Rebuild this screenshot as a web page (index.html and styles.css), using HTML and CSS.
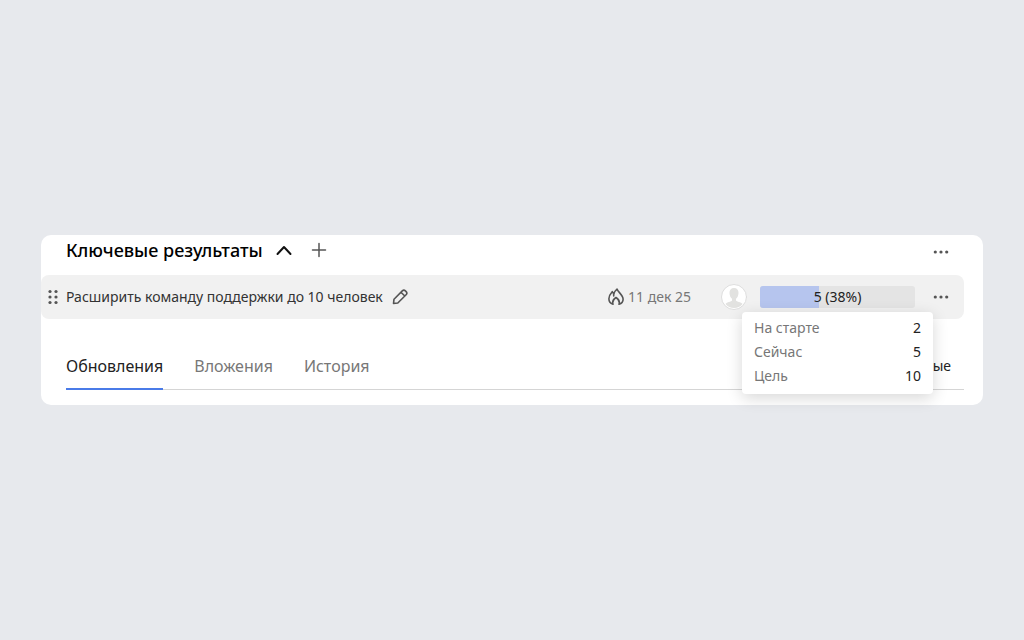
FILE: index.html
```html
<!DOCTYPE html>
<html lang="ru">
<head>
    <meta charset="UTF-8">
    <meta name="viewport" content="width=device-width, initial-scale=1.0">
    <title>Ключевые результаты</title>
    <link rel="stylesheet" href="styles.css">
</head>
<body>
    <main class="card">
        <header class="card-header">
            <div class="heading">
                <h1 class="title">Ключевые результаты</h1>
                <button class="icon-button toggle" aria-label="Свернуть">
                    <svg width="16" height="16" viewBox="0 0 16 16"><path d="M1.5 12 8 5l6.5 7" stroke-width="2"/></svg>
                </button>
                <button class="icon-button add" aria-label="Добавить">
                    <svg width="16" height="16" viewBox="0 0 16 16"><path d="M8 1.5v13M1.5 8h13" stroke-width="1.5"/></svg>
                </button>
            </div>
            <button class="icon-button more" aria-label="Ещё">
                <svg width="16" height="16" viewBox="0 0 16 16" class="dots"><circle cx="2.3" cy="8" r="1.6"/><circle cx="8" cy="8" r="1.6"/><circle cx="13.7" cy="8" r="1.6"/></svg>
            </button>
        </header>

        <section class="result">
            <button class="icon-button drag" aria-label="Переместить">
                <svg width="10" height="16" viewBox="0 0 10 16" class="dots"><circle cx="2" cy="2.5" r="1.6"/><circle cx="8" cy="2.5" r="1.6"/><circle cx="2" cy="8" r="1.6"/><circle cx="8" cy="8" r="1.6"/><circle cx="2" cy="13.5" r="1.6"/><circle cx="8" cy="13.5" r="1.6"/></svg>
            </button>
            <span class="result-name">Расширить команду поддержки до 10 человек</span>
            <button class="icon-button edit" aria-label="Редактировать">
                <svg width="16" height="16" viewBox="0 0 16 16"><path d="M1.5 14.5 2 10.2 10.3 1.9a2.2 2.2 0 0 1 3.1 0l.7.7a2.2 2.2 0 0 1 0 3.1L5.8 14ZM9 3.2 12.8 7" stroke-width="1.6"/></svg>
            </button>
            <div class="deadline">
                <svg width="16" height="18" viewBox="0 0 16 18"><path d="M5 16.2C2.500 15.400.9 13.300.9 10.700c0-2.800 1.500-5 3.300-7 .9.8 1.400 1.800 1.500 2.800C6.200 4.300 7.200 2.500 9 1c1 3.200 6.100 6 6.100 10.200 0 2.500-1.600 4.300-4.100 5M5.700 6.500V8M5 16.200c-.9-2.800.4-5 3-6.700 2.600 1.700 3.900 4 3 6.700" stroke-width="1.6"/></svg>
                <time datetime="2025-12-11">11 дек 25</time>
            </div>
            <svg class="avatar" width="26" height="26" viewBox="0 0 26 26"><circle class="avatar-bg" cx="13" cy="13" r="12.5"/><path class="avatar-person" d="M13 4c-3 0-4.700 2-4.500 5 .1 2.500 1 4.700 2.500 5.800v1.700c-.8 1.200-5 1.600-6.500 3.500C6.500 22.500 9.600 24 13 24s6.500-1.500 8.500-4c-1.500-1.900-5.700-2.300-6.500-3.500v-1.700c1.500-1.100 2.400-3.300 2.500-5.800.2-3-1.500-5-4.500-5Z"/></svg>
            <div class="progress">
                <div class="progress-fill" style="width: 38%"></div>
                <span class="progress-label">5 (38%)</span>
                <dl class="tooltip">
                    <div class="tooltip-row"><dt>На старте</dt><dd>2</dd></div>
                    <div class="tooltip-row"><dt>Сейчас</dt><dd>5</dd></div>
                    <div class="tooltip-row"><dt>Цель</dt><dd>10</dd></div>
                </dl>
            </div>
            <button class="icon-button" aria-label="Ещё">
                <svg width="16" height="16" viewBox="0 0 16 16" class="dots"><circle cx="2.3" cy="8" r="1.6"/><circle cx="8" cy="8" r="1.6"/><circle cx="13.7" cy="8" r="1.6"/></svg>
            </button>
        </section>

        <nav class="tabs">
            <button class="tab active">Обновления</button>
            <button class="tab">Вложения</button>
            <button class="tab">История</button>
            <button class="tab filter">ые</button>
        </nav>
    </main>
</body>
</html>
```
FILE: styles.css
```css
* {
    box-sizing: border-box;
}

body {
    display: flex;
    align-items: center;
    min-height: 100vh;
    margin: 0;
    padding: 0 41px;
    background-color: #e7e9ed;
    color: #222;
    font-family: "Noto Sans", sans-serif;
    font-size: 14px;
    line-height: 24px;
}

button {
    padding: 0;
    border: none;
    background: none;
    color: inherit;
    font: inherit;
    cursor: pointer;
}

svg {
    display: block;
    flex: none;
    fill: none;
    stroke: #555;
    stroke-linecap: round;
    stroke-linejoin: round;
}

.dots {
    fill: #555;
    stroke: none;
}

.card {
    flex: 1;
    padding-bottom: 15px;
    border-radius: 10px;
    background-color: #fff;
}

.card-header {
    display: flex;
    align-items: center;
    height: 40px;
    padding: 0 34px 6px 25px;
}

.heading {
    display: flex;
    align-items: center;
    padding-bottom: 4px;
}

.title {
    margin: 0;
    color: #000;
    font-size: 18px;
    font-weight: 500;
}

.icon-button {
    flex: none;
}

.toggle {
    margin-left: 13px;
}

.toggle svg {
    stroke: #111;
}

.add {
    margin-left: 19px;
}

.more {
    margin-left: auto;
}

.result {
    display: flex;
    align-items: center;
    height: 44px;
    margin-right: 19px;
    padding: 0 15px 0 7px;
    border-radius: 8px;
    background-color: #f1f1f1;
}

.result-name {
    margin-left: 8px;
    color: #333;
}

.edit {
    margin-left: 9px;
}

.deadline {
    display: flex;
    align-items: center;
    gap: 4px;
    margin-left: auto;
    color: #777;
}

.avatar {
    margin-left: 30px;
}

.avatar-bg {
    fill: #fff;
    stroke: #ddd;
}

.avatar-person {
    fill: #e2e2e0;
    stroke: none;
}

/* Progress bar with the details shown under it */
.progress {
    position: relative;
    flex: none;
    width: 155px;
    height: 22px;
    margin: 0 18px 0 13px;
    border-radius: 3px;
    background-color: #e4e4e4;
}

.progress-fill {
    height: 100%;
    border-radius: 3px 0 0 3px;
    background-color: #b6c5ee;
}

.progress-label {
    position: absolute;
    inset: 0;
    color: #222;
    line-height: 22px;
    text-align: center;
}

.tooltip {
    position: absolute;
    top: 26px;
    right: -18px;
    z-index: 1;
    width: 191px;
    margin: 0;
    padding: 4px 12px 6px;
    border-radius: 4px;
    background-color: #fff;
    box-shadow: 0 4px 16px rgba(0, 0, 0, 0.16);
}

.tooltip-row {
    display: flex;
    justify-content: space-between;
}

.tooltip dt {
    color: #777;
}

.tooltip dd {
    margin: 0;
}

.tabs {
    display: flex;
    gap: 31px;
    margin: 25px 19px 0 25px;
    border-bottom: 1px solid #d5d5d5;
    font-size: 16px;
}

.tab {
    height: 46px;
    margin-bottom: -1px;
    border-bottom: 2px solid transparent;
    color: #777;
}

.tab.active {
    border-color: #4a7be8;
    color: #222;
}

.tab.filter {
    margin-left: auto;
    margin-right: 13px;
    color: #222;
    font-size: 14px;
}
```
